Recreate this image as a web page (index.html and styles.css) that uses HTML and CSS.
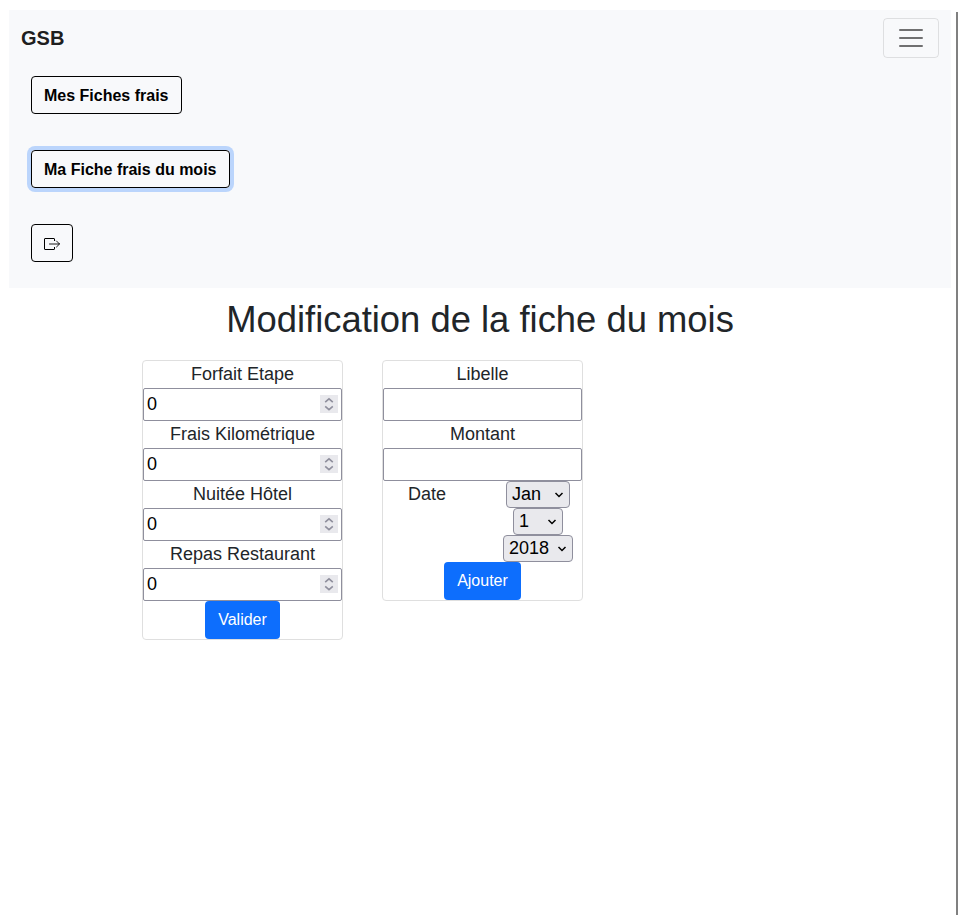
FILE: index.html
```html
<!DOCTYPE html>
<html lang="fr">
<head>
<meta charset="utf-8">
<title>GSB</title>
<link rel="stylesheet" href="styles.css">
</head>
<body>
<div class="page">
  <nav class="navbar">
    <div class="navbar-top">
      <a class="brand">GSB</a>
      <button class="toggler" aria-label="Menu">
        <svg width="30" height="30" viewBox="0 0 30 30"><path stroke="rgba(0,0,0,.55)" stroke-linecap="round" stroke-miterlimit="10" stroke-width="2" d="M4 7h22M4 15h22M4 23h22"/></svg>
      </button>
    </div>
    <div class="nav-links">
      <button class="nav-btn">Mes Fiches frais</button>
      <button class="nav-btn focused">Ma Fiche frais du mois</button>
      <button class="nav-btn" aria-label="Quitter">
        <svg class="exit" width="16" height="16" viewBox="0 0 16 16" fill="none" stroke="#000"><path d="M10.500 5V3a.5.5 0 0 0-.5-.5H1a.5.5 0 0 0-.5.5v10a.5.5 0 0 0 .5.500H10a.5.5 0 0 0 .5-.5V11"/><path stroke-width=".9" stroke-linecap="round" stroke-linejoin="round" d="M5.500 8h10M12.500 5l3 3-3 3"/></svg>
      </button>
    </div>
  </nav>
  <h1>Modification de la fiche du mois</h1>
  <div class="cards">
    <form class="card">
      <label>Forfait Etape</label>
      <div class="number"><input value="0"><span class="spin"><svg width="18" height="18" viewBox="0 0 18 18"><path d="M5.200 7.200 9 3.800 12.800 7.200M5.200 11.300 9 14.700 12.800 11.300"/></svg></span></div>
      <label>Frais Kilométrique</label>
      <div class="number"><input value="0"><span class="spin"><svg width="18" height="18" viewBox="0 0 18 18"><path d="M5.200 7.200 9 3.800 12.800 7.200M5.200 11.300 9 14.700 12.800 11.300"/></svg></span></div>
      <label>Nuitée Hôtel</label>
      <div class="number"><input value="0"><span class="spin"><svg width="18" height="18" viewBox="0 0 18 18"><path d="M5.200 7.200 9 3.800 12.800 7.200M5.200 11.300 9 14.700 12.800 11.300"/></svg></span></div>
      <label>Repas Restaurant</label>
      <div class="number"><input value="0"><span class="spin"><svg width="18" height="18" viewBox="0 0 18 18"><path d="M5.200 7.200 9 3.800 12.800 7.200M5.200 11.300 9 14.700 12.800 11.300"/></svg></span></div>
      <button type="button" class="submit valider">Valider</button>
    </form>
    <form class="card">
      <label>Libelle</label>
      <div class="number"><input></div>
      <label>Montant</label>
      <div class="number"><input></div>
      <div class="date-row">
        <label>Date</label>
        <div class="selects">
          <div class="select month"><span>Jan</span><svg width="10" height="8" viewBox="0 0 10 8"><path d="M1.500 2 5 5.500 8.500 2"/></svg></div>
          <div class="select day"><span>1</span><svg width="10" height="8" viewBox="0 0 10 8"><path d="M1.500 2 5 5.500 8.500 2"/></svg></div>
          <div class="select year"><span>2018</span><svg width="10" height="8" viewBox="0 0 10 8"><path d="M1.500 2 5 5.500 8.500 2"/></svg></div>
        </div>
      </div>
      <button type="button" class="submit ajouter">Ajouter</button>
    </form>
  </div>
</div>
</body>
</html>
```
FILE: styles.css
```css
* { box-sizing: border-box; }
body {
  margin: 0;
  padding: 10px 2px 0 9px;
  display: flex;
  justify-content: space-between;
  height: 915px;
  overflow: hidden;
  background: #fff;
  color: #212529;
  font: 18px/27px "Liberation Sans", Arial, sans-serif;
}
body::after {
  content: "";
  width: 2px;
  margin-top: 2px;
  background: #808080;
}
.page { width: 942px; }
.navbar {
  height: 278px;
  padding: 8px 12px;
  background: #f8f9fb;
}
.navbar-top {
  display: flex;
  justify-content: space-between;
  height: 40px;
}
.brand {
  font-size: 20px;
  font-weight: bold;
  line-height: 40px;
  color: rgba(0, 0, 0, .9);
}
.toggler {
  display: flex;
  align-items: center;
  justify-content: center;
  width: 56px;
  height: 40px;
  padding: 0;
  background: none;
  border: 1px solid rgba(0, 0, 0, .1);
  border-radius: 4px;
}
.nav-links {
  display: flex;
  flex-direction: column;
  align-items: flex-start;
  gap: 36px;
  padding: 18px 10px;
}
.nav-btn {
  height: 38px;
  padding: 2px 12px 0;
  background: none;
  border: 1px solid #000;
  border-radius: 4px;
  color: #000;
  font: bold 16px/24px "Liberation Sans", Arial, sans-serif;
}
.focused { padding-right: 12.6px; box-shadow: 0 0 0 4px #bbd5fc; }
.exit { display: block; }
h1 {
  margin: 9px 0 17px;
  text-align: center;
  font-size: 36.4px;
  font-weight: normal;
  line-height: 46px;
}
.cards {
  display: flex;
  align-items: flex-start;
  gap: 39px;
  padding-left: 133px;
}
.card {
  display: flex;
  flex-direction: column;
  width: 201px;
  border: 1px solid #dfdfdf;
  border-radius: 4px;
}
.card label { height: 27px; text-align: center; }
.number {
  display: flex;
  align-items: center;
  height: 33px;
  padding: 0 3px;
  border: 1px solid #8f8f9d;
  border-radius: 2px;
}
.number input {
  flex: 1;
  min-width: 0;
  padding: 0;
  border: 0;
  outline: 0;
  background: none;
  color: #000;
  font: inherit;
}
.spin { width: 18px; height: 18px; margin-bottom: 1px; background: #e9e9ed; }
.spin svg { display: block; fill: none; stroke: #8f8f9d; stroke-width: 1.6; }
.submit {
  align-self: center;
  height: 38px;
  padding: 0;
  border: 0;
  border-radius: 4px;
  background: #0d6efd;
  color: #fff;
  font: 16px/24px "Liberation Sans", Arial, sans-serif;
}
.valider { width: 75px; }
.ajouter { width: 77px; }
.date-row {
  display: grid;
  grid-template-columns: 88px 88px;
  justify-content: space-between;
}
.selects { display: flex; flex-direction: column; align-items: center; }
.select {
  display: flex;
  align-items: center;
  justify-content: space-between;
  height: 27px;
  padding: 0 5px 1px;
  border: 1px solid #8f8f9d;
  border-radius: 4px;
  background: #e9e9ed;
  color: #000;
}
.select svg { margin-top: 2px; fill: none; stroke: #000; stroke-width: 1.5; }
.month { width: 64px; }
.day { width: 50px; }
.year { width: 70px; }
```
